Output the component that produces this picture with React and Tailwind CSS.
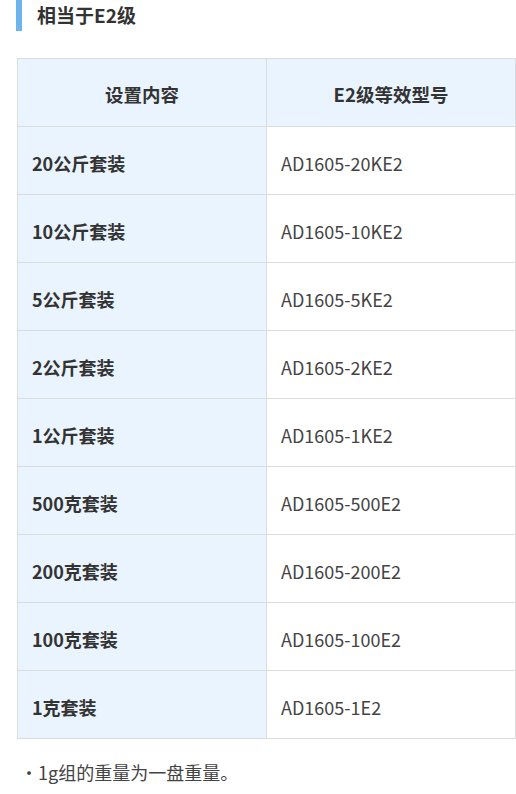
const rows = [
  ['20公斤套装', 'AD1605-20KE2'],
  ['10公斤套装', 'AD1605-10KE2'],
  ['5公斤套装', 'AD1605-5KE2'],
  ['2公斤套装', 'AD1605-2KE2'],
  ['1公斤套装', 'AD1605-1KE2'],
  ['500克套装', 'AD1605-500E2'],
  ['200克套装', 'AD1605-200E2'],
  ['100克套装', 'AD1605-100E2'],
  ['1克套装', 'AD1605-1E2'],
]

export default function App() {
  return (
    <div
      className="w-[516px] h-[794px] bg-white overflow-hidden text-[#333]"
      style={{ fontFamily: '"Noto Sans CJK SC", "Noto Sans", sans-serif' }}
    >
      {/* Heading */}
      <div className="ml-4 flex items-center h-[31px] border-l-[6px] border-[#6db3ec] pl-[15px]">
        <h2 className="text-[19px] font-bold leading-none text-[#333] -mt-[2px]">相当于E2级</h2>
      </div>

      {/* Table */}
      <table className="mt-[27px] ml-[17px] w-[499px] border-collapse table-fixed text-[18px]">
        <thead>
          <tr className="h-[68px] bg-[#eaf4fe]">
            <th className="w-1/2 border border-[#dcdcdc] pt-[5px] font-bold text-center text-[18.5px]">设置内容</th>
            <th className="w-1/2 border border-[#dcdcdc] pt-[5px] font-bold text-center text-[18.5px]">E2级等效型号</th>
          </tr>
        </thead>
        <tbody>
          {rows.map(([name, model]) => (
            <tr key={model} className="h-[68px]">
              <td className="border border-[#dcdcdc] bg-[#eaf4fe] px-[14px] pt-[5px] font-bold">{name}</td>
              <td className="border border-[#dcdcdc] bg-white px-[14px] pt-[5px] text-[#444]">{model}</td>
            </tr>
          ))}
        </tbody>
      </table>

      <p className="mt-[20px] ml-[20px] text-[18px] text-[#444]">・1g组的重量为一盘重量。</p>
    </div>
  )
}
